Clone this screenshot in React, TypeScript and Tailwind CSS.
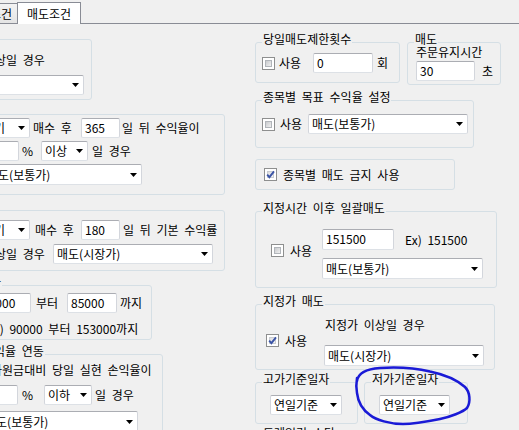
import React from 'react';

// 매도조건 탭 화면 (WinForms 스타일 재현)

type GroupProps = {
  className?: string;
  title?: string;
  titleClass?: string;
  children?: React.ReactNode;
};

const GroupBox = ({ className, title, titleClass, children }: GroupProps) => (
  <fieldset className={`min-w-0 shrink-0 rounded-[3px] border border-[#d5dfe5] ${className ?? ''}`}>
    {title && (
      <legend className={`whitespace-nowrap px-[1px] pb-[6px] leading-[14px] ${titleClass ?? 'ml-[6px]'}`}>
        {title}
      </legend>
    )}
    {children}
  </fieldset>
);

const Combo = ({ className, text }: { className: string; text?: string }) => (
  <div
    className={`flex shrink-0 items-center justify-between rounded-[2px] border border-[#abadb3] border-x-[#d3d6dc] border-b-[#dde1e6] bg-white pl-[3px] ${className}`}
  >
    <span className="whitespace-nowrap">{text}</span>
    <svg width="7" height="4" viewBox="0 0 7 4" className="mr-[4px] shrink-0">
      <path d="M0 0H7L3.5 4Z" fill="#000" />
    </svg>
  </div>
);

const TextBox = ({ className, value }: { className: string; value?: string }) => (
  <div
    className={`flex shrink-0 items-center rounded-[2px] border border-[#abadb3] border-x-[#d3d6dc] border-b-[#dde1e6] bg-white pl-[3px] ${className}`}
  >
    <span className="-mt-px whitespace-nowrap">{value}</span>
  </div>
);

const CheckBox = ({ checked, className }: { checked?: boolean; className?: string }) => (
  <span className={`relative flex h-[13px] w-[13px] shrink-0 border border-[#8e8f8f] bg-white p-[2px] ${className ?? ''}`}>
    {checked ? (
      <span className="h-full w-full border border-[#c9ccd1] bg-linear-to-br from-[#dcdde0] to-[#f6f6f6]" />
    ) : (
      <span className="h-full w-full border border-[#b1b5ba] bg-linear-to-br from-[#c9cbce] to-[#f0f0f0]" />
    )}
    {checked && (
      <svg className="absolute left-[0px] top-[0px]" width="11" height="11" viewBox="0 0 11 11">
        <path d="M2.2 5.6 4.4 8.2 9 2.4" stroke="#3b54a6" strokeWidth="1.9" fill="none" />
      </svg>
    )}
  </span>
);

export default function App() {
  return (
    <div className="relative h-[430px] w-[519px] overflow-hidden bg-[#f0f0f0] text-[12px] leading-[14px] text-black [font-family:'Noto_Sans_CJK_KR','Noto_Sans',sans-serif] [word-spacing:3px]">
      {/* 탭 영역 */}
      <div className="flex h-[24px] items-end border-b border-[#898c95]">
        <div className="-ml-[30px] flex h-[20px] w-[48px] shrink-0 items-center border border-b-0 border-[#898c95] bg-linear-to-b from-[#f3f3f3] to-[#e4e4e4] pl-[19px]">
          조건
        </div>
        <div className="relative -mb-px -ml-px flex h-[22px] w-[64px] shrink-0 items-center justify-center border border-b-0 border-[#898c95] bg-white">
          매도조건
        </div>
      </div>

      <div className="flex">
        {/* 왼쪽 열 (왼쪽이 잘려 보임) */}
        <div className="flex w-[255px] shrink-0 flex-col pt-[15px]">
          <GroupBox className="-ml-[100px] h-[61px] w-[192px]">
            <div className="ml-[83px] mt-[13px] whitespace-nowrap">이상일 경우</div>
            <Combo className="ml-[9px] mt-[8px] h-[20px] w-[174px]" text="매도(시장가)" />
          </GroupBox>

          <GroupBox className="-ml-[100px] mt-[14px] h-[81px] w-[325px]">
            <div className="mt-[3px] flex h-[20px] items-center">
              <Combo className="ml-[56px] h-full w-[73px]" text="매도하기" />
              <span className="ml-[3px] w-[48px] shrink-0 whitespace-nowrap">매수 후</span>
              <TextBox className="h-full w-[39px]" value="365" />
              <span className="ml-[2px] whitespace-nowrap">일 뒤 수익율이</span>
            </div>
            <div className="mt-[3px] flex h-[20px] items-center">
              <TextBox className="ml-[69px] h-full w-[49px]" value="10" />
              <span className="w-[22px] shrink-0 pl-[3px]">%</span>
              <Combo className="h-full w-[47px]" text="이상" />
              <span className="ml-[4px] whitespace-nowrap">일 경우</span>
            </div>
            <Combo className="ml-[82px] mt-[3px] h-[21px] w-[159px]" text="매도(보통가)" />
          </GroupBox>

          <GroupBox className="-ml-[100px] mt-[15px] h-[61px] w-[325px]">
            <div className="mt-[9px] flex h-[20px] items-center">
              <Combo className="ml-[56px] h-full w-[73px]" text="매도하기" />
              <span className="ml-[5px] w-[46px] shrink-0 whitespace-nowrap">매수 후</span>
              <TextBox className="h-full w-[39px]" value="180" />
              <span className="ml-[3px] whitespace-nowrap">일 뒤 기본 수익률</span>
            </div>
            <div className="mt-[4px] flex h-[20px] items-center">
              <span className="ml-[83px] w-[69px] shrink-0 whitespace-nowrap">이상일 경우</span>
              <Combo className="h-full w-[160px]" text="매도(시장가)" />
            </div>
          </GroupBox>

          <GroupBox className="-ml-[100px] mt-[4px] h-[65px] w-[252px]" title="매도가" titleClass="ml-[66px]">
            <div className="-mt-[2px] flex h-[20px] items-center">
              <TextBox className="ml-[77px] h-full w-[53px]" value="90000" />
              <span className="w-[36px] shrink-0 pl-[5px]">부터</span>
              <TextBox className="h-full w-[50px]" value="85000" />
              <span className="ml-[3px] whitespace-nowrap">까지</span>
            </div>
            <div className="ml-[86px] mt-[9px] whitespace-nowrap">Ex) 90000 부터 153000까지</div>
          </GroupBox>

          <GroupBox className="-ml-[100px] mt-[4px] h-[97px] w-[263px]" title="수익율 연동" titleClass="ml-[81px]">
            <div className="-mt-[1px] ml-[79px] whitespace-nowrap">투자원금대비 당일 실현 손익율이</div>
            <div className="mt-[8px] flex h-[20px] items-center">
              <TextBox className="ml-[69px] h-full w-[48px]" value="-3" />
              <span className="w-[26px] shrink-0 pl-[4px]">%</span>
              <Combo className="h-full w-[48px]" text="이하" />
              <span className="ml-[3px] whitespace-nowrap">일 경우</span>
            </div>
            <Combo className="ml-[80px] mt-[6px] h-[21px] w-[157px]" text="매도(보통가)" />
          </GroupBox>
        </div>

        {/* 오른쪽 열 */}
        <div className="flex flex-col pt-[8px]">
          <div className="flex items-start gap-[7px]">
            <GroupBox className="h-[51px] w-[145px]" title="당일매도제한횟수">
              <div className="mt-[1px] flex h-[20px] items-center">
                <CheckBox className="ml-[6px]" />
                <span className="ml-[4px] w-[24px] shrink-0 whitespace-nowrap">사용</span>
                <TextBox className="ml-[10px] h-full w-[60px]" value="0" />
                <span className="ml-[4px]">회</span>
              </div>
            </GroupBox>
            <GroupBox className="h-[53px] w-[94px]" title="매도">
              <div className="-mt-[6px] ml-[8px] whitespace-nowrap leading-[12px]">주문유지시간</div>
              <div className="mt-[3px] flex h-[20px] items-center">
                <TextBox className="ml-[8px] h-full w-[59px]" value="30" />
                <span className="ml-[7px]">초</span>
              </div>
            </GroupBox>
          </div>

          <GroupBox className="mt-[5px] h-[58px] w-[219px]" title="종목별 목표 수익율 설정">
            <div className="mt-[4px] flex h-[20px] items-center">
              <CheckBox className="ml-[6px]" />
              <span className="ml-[5px] w-[24px] shrink-0 whitespace-nowrap">사용</span>
              <Combo className="ml-[4px] h-full w-[160px]" text="매도(보통가)" />
            </div>
          </GroupBox>

          <GroupBox className="mt-[11px] h-[31px] w-[200px]">
            <div className="flex h-[29px] items-center">
              <CheckBox checked className="ml-[8px]" />
              <span className="ml-[6px] whitespace-nowrap">종목별 매도 금지 사용</span>
            </div>
          </GroupBox>

          <GroupBox className="mt-[11px] h-[87px] w-[242px]" title="지정시간 이후 일괄매도">
            <div className="flex">
              <div className="w-[66px] shrink-0 pt-[23px]">
                <div className="flex h-[13px] items-center">
                  <CheckBox className="ml-[15px]" />
                  <span className="ml-[6px] whitespace-nowrap">사용</span>
                </div>
              </div>
              <div className="mt-[8px]">
                <div className="flex h-[21px] items-center">
                  <TextBox className="h-full w-[72px]" value="151500" />
                  <span className="ml-[11px] whitespace-nowrap">Ex) 151500</span>
                </div>
                <Combo className="mt-[8px] h-[21px] w-[161px]" text="매도(보통가)" />
              </div>
            </div>
          </GroupBox>

          <GroupBox className="mt-[6px] h-[76px] w-[240px]" title="지정가 매도">
            <div className="flex">
              <div className="w-[68px] shrink-0 pt-[20px]">
                <div className="flex h-[13px] items-center">
                  <CheckBox checked className="ml-[10px]" />
                  <span className="ml-[6px] whitespace-nowrap">사용</span>
                </div>
              </div>
              <div className="mt-[4px]">
                <div className="ml-[1px] whitespace-nowrap">지정가 이상일 경우</div>
                <Combo className="mt-[13px] h-[21px] w-[160px]" text="매도(시장가)" />
              </div>
            </div>
          </GroupBox>

          <div className="mt-[2px] flex items-start gap-[6px]">
            <GroupBox className="h-[52px] w-[103px]" title="고가기준일자">
              <Combo className="ml-[14px] mt-[3px] h-[20px] w-[72px]" text="연일기준" />
            </GroupBox>
            <GroupBox className="h-[52px] w-[104px]" title="저가기준일자">
              <Combo className="ml-[14px] mt-[3px] h-[20px] w-[71px]" text="연일기준" />
            </GroupBox>
          </div>

          <GroupBox className="mt-[2px] h-[60px] w-[240px]" title="트레일링 스탑" />
        </div>
      </div>

      {/* 파란 펜 표시 */}
      <svg className="pointer-events-none absolute left-0 top-0" width="519" height="430" viewBox="0 0 519 430">
        <path
          d="M357 381 C358 374 366 369 380 368 C395 367 415 368 430 371.5 C442 374 456 379 465 387 C470 392 471 402 467 408 C463 412 450 417 440 419 C430 421 415 424 403 424 C390 424 376 420 370 415 C363 410 358 402 357 393 C356 388 356 384 357 378"
          stroke="#1a1ad6"
          strokeWidth="2.5"
          strokeLinecap="round"
          fill="none"
        />
      </svg>
    </div>
  );
}
